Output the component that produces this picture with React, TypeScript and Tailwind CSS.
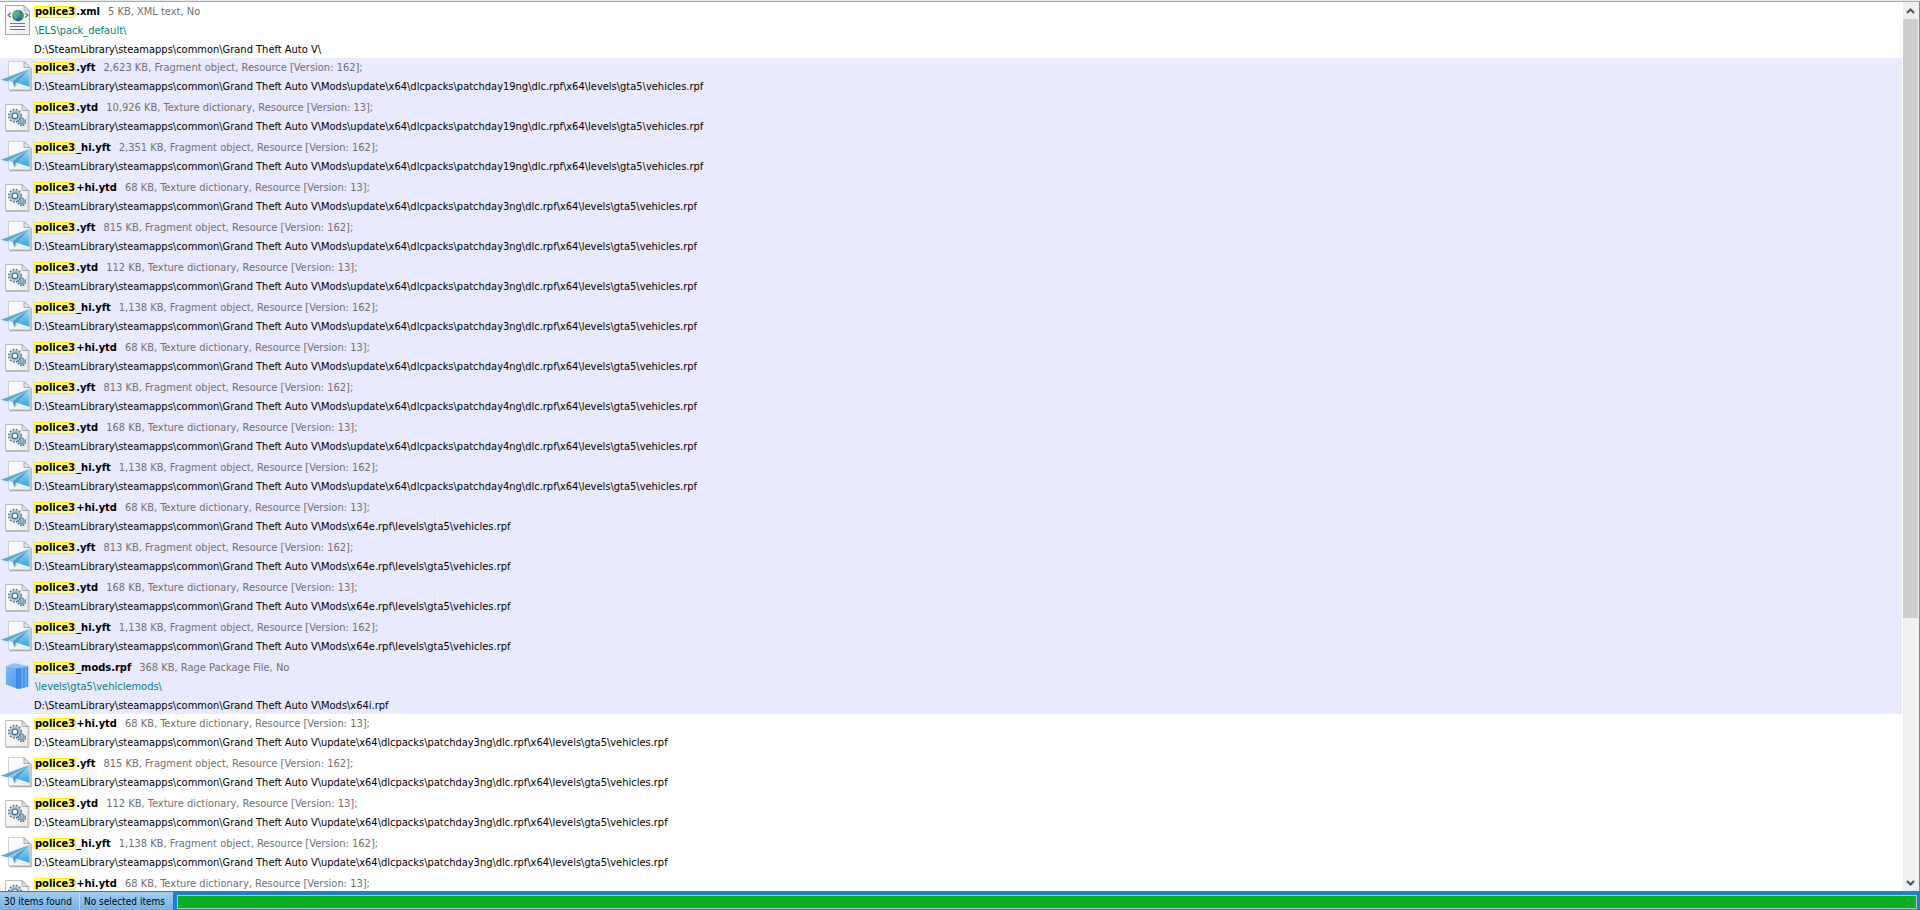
type Kind = 'xml' | 'yft' | 'ytd' | 'rpf';

interface Item {
  kind: Kind;
  rest: string;
  info: string;
  inner?: string;
  path?: string;
  selected?: boolean;
}

const ROOT = 'D:\\SteamLibrary\\steamapps\\common\\Grand Theft Auto V\\';
const VEHICLES = '\\levels\\gta5\\vehicles.rpf';
const DAY19 = ROOT + 'Mods\\update\\x64\\dlcpacks\\patchday19ng\\dlc.rpf\\x64' + VEHICLES;
const DAY3 = ROOT + 'Mods\\update\\x64\\dlcpacks\\patchday3ng\\dlc.rpf\\x64' + VEHICLES;
const DAY4 = ROOT + 'Mods\\update\\x64\\dlcpacks\\patchday4ng\\dlc.rpf\\x64' + VEHICLES;
const X64E = ROOT + 'Mods\\x64e.rpf' + VEHICLES;
const ORIG3 = ROOT + 'update\\x64\\dlcpacks\\patchday3ng\\dlc.rpf\\x64' + VEHICLES;

const yft = (size: string, path?: string, selected = true, rest = '.yft'): Item => ({
  kind: 'yft', rest, info: `${size} KB, Fragment object, Resource [Version: 162];`, path, selected,
});
const ytd = (size: string, path?: string, selected = true, rest = '.ytd'): Item => ({
  kind: 'ytd', rest, info: `${size} KB, Texture dictionary, Resource [Version: 13];`, path, selected,
});

const items: Item[] = [
  { kind: 'xml', rest: '.xml', info: '5 KB, XML text, No', inner: '\\ELS\\pack_default\\', path: ROOT },
  yft('2,623', DAY19),
  ytd('10,926', DAY19),
  yft('2,351', DAY19, true, '_hi.yft'),
  ytd('68', DAY3, true, '+hi.ytd'),
  yft('815', DAY3),
  ytd('112', DAY3),
  yft('1,138', DAY3, true, '_hi.yft'),
  ytd('68', DAY4, true, '+hi.ytd'),
  yft('813', DAY4),
  ytd('168', DAY4),
  yft('1,138', DAY4, true, '_hi.yft'),
  ytd('68', X64E, true, '+hi.ytd'),
  yft('813', X64E),
  ytd('168', X64E),
  yft('1,138', X64E, true, '_hi.yft'),
  {
    kind: 'rpf', rest: '_mods.rpf', info: '368 KB, Rage Package File, No',
    inner: '\\levels\\gta5\\vehiclemods\\', path: ROOT + 'Mods\\x64i.rpf', selected: true,
  },
  ytd('68', ORIG3, false, '+hi.ytd'),
  yft('815', ORIG3, false),
  ytd('112', ORIG3, false),
  yft('1,138', ORIG3, false, '_hi.yft'),
  ytd('68', undefined, false, '+hi.ytd'),
];

function Defs() {
  return (
    <svg className="absolute size-0" aria-hidden="true">
      <defs>
        <linearGradient id="paper" x1="0" y1="0" x2="1" y2="1">
          <stop offset="0" stopColor="#ffffff" />
          <stop offset="1" stopColor="#ececec" />
        </linearGradient>
        <linearGradient id="plane" x1="0" y1="0" x2="0" y2="1">
          <stop offset="0" stopColor="#a5dcf4" />
          <stop offset="1" stopColor="#2fa6e6" />
        </linearGradient>
        <linearGradient id="pack" x1="0" y1="0" x2="1" y2="1">
          <stop offset="0" stopColor="#7fbcf8" />
          <stop offset="1" stopColor="#4a98f3" />
        </linearGradient>
        <radialGradient id="globe" cx="0.4" cy="0.35" r="0.7">
          <stop offset="0" stopColor="#6fb4f5" />
          <stop offset="1" stopColor="#123f9c" />
        </radialGradient>
      </defs>
    </svg>
  );
}

function XmlIcon() {
  return (
    <>
      <path d="M4.5 1.5H23l5.500 5.500v23.500h-24z" fill="url(#paper)" stroke="#a3a3a3" />
      <path d="M23 1.500V7h5.500z" fill="#e2e2e2" stroke="#a3a3a3" strokeWidth="0.8" />
      <path d="M10 9l-3 2.300 3 2.300M24 9l3 2.300-3 2.300" fill="none" stroke="#6b7280" strokeWidth="1.2" />
      <circle cx="17" cy="11.5" r="5.7" fill="url(#globe)" />
      <path d="M12.300 9.500c1.500-2.700 4-3.300 5.500-2.800l-1 2 .6 1.300-2 1.400.5 2-1.400 2c-1.600-1.300-2.700-3.500-2.200-5.900z" fill="#4fc04a" />
      <path d="M19.500 9l2.300.6c.8 2.300.3 4-1.300 5.500l-1.500-1.800-.8-2z" fill="#35a53a" />
      <path d="M9 19.500h15M9 22.500h15M9 25.500h15" stroke="#6e7890" />
    </>
  );
}

function YftIcon() {
  return (
    <>
      <path d="M8.500 30.500h21.500V8" fill="none" stroke="#9a9a9a" strokeOpacity="0.8" strokeWidth="1.5" />
      <path d="M7.500 1.500H23l6 6v22H7.500z" fill="url(#paper)" stroke="#cfcfcf" />
      <path d="M23 1.500v6h6z" fill="#e4e4e4" stroke="#a0a0a0" strokeWidth="0.9" />
      <path d="M0 19.800L28.500 9 11.500 22z" fill="#8ecbe9" />
      <path d="M0 19.800L28.500 9 6 21.300z" fill="#5aa9d4" />
      <path d="M11.500 21.500L28.500 9v17.800z" fill="url(#plane)" />
      <path d="M11.500 21.500L28.500 9 15.500 22.600l-2 4.900z" fill="#4a9cc9" />
      <path d="M15.500 22.600l3 1.200-5 3.700z" fill="#b5e2f6" />
    </>
  );
}

function YtdIcon() {
  return (
    <>
      <path d="M5 31.500h23V10" fill="none" stroke="#9a9a9a" strokeOpacity="0.6" />
      <path d="M4.500 4.500H21l6 6v20H4.500z" fill="url(#paper)" stroke="#bdbdbd" />
      <path d="M21 4.500v6h6z" fill="#e4e4e4" stroke="#a0a0a0" strokeWidth="0.9" />
      <circle cx="14" cy="15.8" r="6.1" fill="none" stroke="#4f7290" strokeWidth="1.8" strokeDasharray="1.8 1.4" />
      <circle cx="14" cy="15.8" r="4.3" fill="#f6fafc" stroke="#a9c6da" strokeWidth="2.4" />
      <circle cx="14" cy="15.8" r="2.8" fill="none" stroke="#3f6384" strokeWidth="1.1" />
      <circle cx="20.8" cy="21.8" r="3.6" fill="none" stroke="#48698a" strokeWidth="1.5" strokeDasharray="1.6 1.2" />
      <circle cx="20.8" cy="21.8" r="2.3" fill="#f6fafc" stroke="#86a9c3" strokeWidth="1.7" />
      <circle cx="20.8" cy="21.8" r="1.2" fill="#ffffff" stroke="#3f6384" strokeWidth="0.8" />
    </>
  );
}

function RpfIcon() {
  return (
    <>
      <path d="M5 6.500L13 3l14 3v20.500L18.500 29 5 24.500z" fill="#8cc4fa" />
      <path d="M5 6.500l11 2v20L5 24.500z" fill="url(#pack)" />
      <path d="M16 8.500l3.500-1v21l-3.500.3z" fill="#4292f2" />
      <path d="M19.500 8l3.700-1v20.500l-3.700 1z" fill="#62aaf7" />
      <path d="M23.200 7.500l3.800-1v20l-3.800 1z" fill="#62aaf7" />
      <path d="M15.800 8.500v20M19.400 7.800v20.800M23 7.200v20.400M26.700 6.500v20" stroke="#2a74dc" strokeWidth="0.8" />
    </>
  );
}

function FileIcon({ kind }: { kind: Kind }) {
  return (
    <svg viewBox="0 0 32 32" className="mt-0.5 ml-px size-8 shrink-0" aria-hidden="true">
      {kind === 'xml' && <XmlIcon />}
      {kind === 'yft' && <YftIcon />}
      {kind === 'ytd' && <YtdIcon />}
      {kind === 'rpf' && <RpfIcon />}
    </svg>
  );
}

function Row({ item }: { item: Item }) {
  return (
    <li className={`flex shrink-0 ${item.inner ? 'h-14' : 'h-10'} ${item.selected ? 'bg-[#e9e9ff]' : 'bg-white'}`}>
      <FileIcon kind={item.kind} />
      <div className="ml-px leading-[19px] whitespace-nowrap">
        <div className="flex h-[19px] items-center">
          <mark className="rounded-xs bg-[#ffff9c] px-px leading-3 font-bold text-black outline -outline-offset-1 outline-[#fff200]">police3</mark>
          <span className="font-bold">{item.rest}</span>
          <span className="ml-2 text-[#707070]">{item.info}</span>
        </div>
        {item.inner && <div className="pl-px text-[#008080]">{item.inner}</div>}
        {item.path && <div>{item.path}</div>}
      </div>
    </li>
  );
}

function ScrollBar() {
  return (
    <div className="flex w-[17px] shrink-0 flex-col border-r border-[#85858d] bg-[#f0f0f0] pr-px">
      <button type="button" aria-label="Scroll up" className="flex h-[17px] shrink-0 items-center justify-center">
        <svg viewBox="0 0 9 6" className="h-1.5 w-[9px]" aria-hidden="true">
          <path d="M1 5l3.500-3.500L8 5" fill="none" stroke="#505050" strokeWidth="2" />
        </svg>
      </button>
      <div className="min-h-0 flex-1">
        <div className="h-[70%] bg-[#cdcdcd]"></div>
      </div>
      <button type="button" aria-label="Scroll down" className="flex h-[17px] shrink-0 items-center justify-center">
        <svg viewBox="0 0 9 6" className="h-1.5 w-[9px]" aria-hidden="true">
          <path d="M1 1l3.500 3.500L8 1" fill="none" stroke="#505050" strokeWidth="2" />
        </svg>
      </button>
    </div>
  );
}

export default function App() {
  return (
    <div className="flex h-screen flex-col overflow-hidden bg-white font-['DejaVu_Sans_Condensed','DejaVu_Sans',sans-serif] text-[11px] text-black">
      <Defs />
      <div className="h-0.5 shrink-0 border-b border-[#8fb0cf] bg-[#e6e9ee]"></div>
      <main className="flex min-h-0 flex-1">
        <ul className="mr-px flex min-w-0 flex-1 flex-col overflow-hidden">
          {items.map((item, i) => <Row key={i} item={item} />)}
        </ul>
        <ScrollBar />
      </main>
      <footer className="flex h-[19px] shrink-0 border-t border-[#1c80d6] bg-[#1c80d6] text-[10px] leading-[18px] whitespace-nowrap">
        <div className="w-20 border-r border-[#c5e0f7] bg-linear-to-b from-[#a3cdf2] to-[#71b1e8] pt-px pl-1">30 items found</div>
        <div className="w-[94px] border-r border-[#3d6f9e] bg-linear-to-b from-[#a3cdf2] to-[#71b1e8] pt-px pl-1">No selected items</div>
        <div
          role="progressbar"
          aria-label="Search progress"
          aria-valuenow={100}
          className="mt-[3px] mr-[3px] mb-px ml-[3px] flex-1 border border-[#b9c4b9] bg-[#06b025]"
        ></div>
      </footer>
    </div>
  );
}
